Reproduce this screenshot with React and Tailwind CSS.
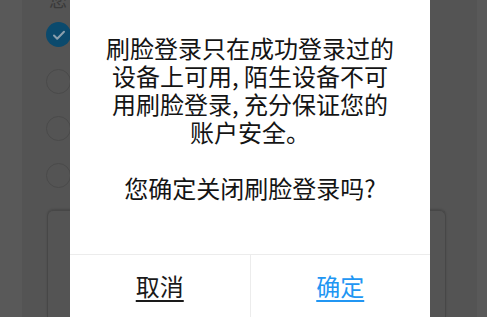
import React from "react";

const lines = [
  "刷脸登录只在成功登录过的",
  "设备上可用, 陌生设备不可",
  "用刷脸登录, 充分保证您的",
  "账户安全。",
];

const Radio = ({ checked }) =>
  checked ? (
    <div className="w-[25px] h-[25px] rounded-full bg-[#0b4a6d] flex items-center justify-center">
      <svg width="14" height="14" viewBox="0 0 14 14" fill="none">
        <path d="M2 7.5l3.2 3.2L12 3.8" stroke="#8a9fad" strokeWidth="2" strokeLinecap="round" strokeLinejoin="round" />
      </svg>
    </div>
  ) : (
    <div className="w-[25px] h-[25px] rounded-full border border-[#4a4a4a]" />
  );

export default function App() {
  return (
    <div
      className="relative w-[487px] h-[317px] overflow-hidden bg-[#545454]"
      style={{ fontFamily: '"Noto Sans CJK SC", "Noto Sans", sans-serif' }}
    >
      {/* dimmed page underneath */}
      <div className="flex h-full">
        <div className="w-[22px] bg-[#595959]" />
        <div className="flex-1 flex flex-col pl-[25px] pr-[31px]">
          <div className="text-[18px] leading-none text-[#3a3a3a] -mt-[10px] ml-[2px]">您</div>
          <div className="flex flex-col gap-[22px] mt-[14px] ml-[-1px]">
            <Radio checked />
            <Radio />
            <Radio />
            <Radio />
          </div>
          <div className="mt-[22px] flex-1 rounded-t-[6px] border border-b-0 border-[#474747] shadow-[0_-1px_2px_rgba(0,0,0,0.15)]" />
        </div>
        <div className="w-[10px] bg-[#595959]" />
      </div>

      {/* dialog */}
      <div className="absolute left-[70px] top-0 w-[360px] h-[317px] bg-white flex flex-col">
        <div className="pt-[34px] text-center text-[24px] leading-[28px] text-[#141414] whitespace-nowrap">
          {lines.map((l) => (
            <div key={l}>{l}</div>
          ))}
          <div>&nbsp;</div>
          <div>您确定关闭刷脸登录吗?</div>
        </div>
        <div className="mt-auto h-[63px] border-t border-[#ececec] flex">
          <button className="flex-1 flex items-center justify-center text-[24px] text-[#1a1a1a] underline underline-offset-[4px] decoration-[1.5px]">
            取消
          </button>
          <div className="w-px bg-[#ececec]" />
          <button className="flex-1 flex items-center justify-center text-[24px] text-[#2196f3] underline underline-offset-[4px] decoration-[1.5px]">
            确定
          </button>
        </div>
      </div>
    </div>
  );
}
